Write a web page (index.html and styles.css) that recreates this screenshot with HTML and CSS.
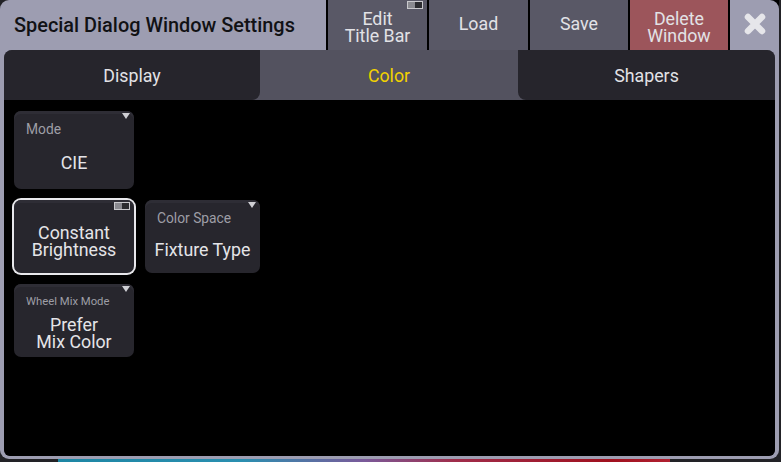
FILE: index.html
```html
<!DOCTYPE html>
<html>
<head>
<meta charset="utf-8">
<link rel="stylesheet" href="styles.css">
</head>
<body>
<div class="window">
  <div class="titlebar">
    <div class="title">Special Dialog Window Settings</div>
    <div class="btns">
      <div class="btn w99 two">
        <svg class="toggle" width="16" height="8" viewBox="0 0 16 8"><rect x="0.5" y="0.5" width="15" height="7" fill="#8a8a90" stroke="#c8c8cc"/><rect x="8" y="1" width="7" height="6" fill="#2c2c30"/></svg>
        <span>Edit<br>Title Bar</span>
      </div>
      <div class="btn w99"><span>Load</span></div>
      <div class="btn w98"><span>Save</span></div>
      <div class="btn w98 danger two"><span>Delete<br>Window</span></div>
      <div class="close">
        <svg width="24" height="24" viewBox="0 0 24 24"><path d="M5 5 L19 19 M19 5 L5 19" stroke="#e6e6ea" stroke-width="6.5" stroke-linecap="round"/></svg>
      </div>
    </div>
  </div>
  <div class="content">
    <div class="tabs">
      <div class="tab tab-left">Display</div>
      <div class="tab tab-active">Color</div>
      <div class="tab tab-right">Shapers</div>
    </div>
    <div class="body">
      <div class="grid">
        <div class="card tall">
          <span class="tri"></span>
          <div class="label">Mode</div>
          <div class="value">CIE</div>
        </div>
        <div></div>
        <div class="card selected nolabel">
          <svg class="toggle-card" width="16" height="8" viewBox="0 0 16 8"><rect x="0.5" y="0.5" width="15" height="7" fill="#8a8a90" stroke="#c8c8cc"/><rect x="8" y="1" width="7" height="6" fill="#2c2c30"/></svg>
          <div class="value">Constant<br>Brightness</div>
        </div>
        <div class="card">
          <span class="tri"></span>
          <div class="label">Color Space</div>
          <div class="value">Fixture Type</div>
        </div>
        <div class="card">
          <span class="tri"></span>
          <div class="label small">Wheel Mix Mode</div>
          <div class="value">Prefer<br>Mix Color</div>
        </div>
      </div>
    </div>
  </div>
</div>
<div class="strip"></div>
</body>
</html>
```
FILE: styles.css
```css
html, body {
  margin: 0;
  padding: 0;
}
body {
  width: 781px;
  height: 462px;
  background: #222226;
  font-family: Roboto, "Liberation Sans", sans-serif;
  overflow: hidden;
}
.window {
  width: 779px;
  height: 459px;
  box-sizing: border-box;
  background: #9d9db1;
  border-radius: 9px;
  padding-bottom: 3px;
  display: flex;
  flex-direction: column;
}
.titlebar {
  height: 50px;
  display: flex;
  flex-shrink: 0;
}
.title {
  width: 326px;
  padding-left: 14px;
  box-sizing: border-box;
  display: flex;
  align-items: center;
  font-size: 19.9px;
  font-weight: 500;
  color: #111114;
  padding-top: 1px;
  white-space: nowrap;
}
.btns {
  flex: 1;
  display: flex;
  gap: 2px;
  background: #000;
  padding-left: 2px;
}
.btn {
  position: relative;
  background: #595866;
  color: #e2e2e6;
  font-size: 17.8px;
  line-height: 17px;
  display: flex;
  align-items: center;
  justify-content: center;
  text-align: center;
  padding-bottom: 3px;
  box-sizing: border-box;
  white-space: nowrap;
}
.btn.two {
  padding-bottom: 0;
  padding-top: 4px;
}
.w99 { width: 99px; }
.w98 { width: 98px; }
.danger { background: #9c555b; }
.toggle {
  position: absolute;
  top: 1px;
  right: 4px;
}
.close {
  flex: 1;
  background: #9d9db1;
  border-top-right-radius: 9px;
  display: flex;
  align-items: center;
  justify-content: center;
  padding-bottom: 2px;
}
.content {
  flex: 1;
  margin: 0 4px;
  background: #53525f;
  border-radius: 8px 8px 6px 6px;
  overflow: hidden;
  display: flex;
  flex-direction: column;
}
.tabs {
  height: 50px;
  display: flex;
  flex-shrink: 0;
}
.tab {
  display: flex;
  align-items: center;
  justify-content: center;
  font-size: 17.8px;
  color: #e2e2e6;
  padding-top: 1px;
  box-sizing: border-box;
}
.tab-left {
  width: 256px;
  background: #26252c;
  border-bottom-right-radius: 8px;
}
.tab-active {
  width: 258px;
  color: #f2d200;
}
.tab-right {
  flex: 1;
  background: #26252c;
  border-bottom-left-radius: 8px;
}
.body {
  flex: 1;
  background: #000;
  padding: 11px 10px;
}
.grid {
  display: grid;
  grid-template-columns: 120px 115px;
  grid-template-rows: 78px 73px 73px;
  gap: 11px;
}
.card {
  position: relative;
  background: #27262d;
  box-shadow: inset 0 3px 0 #2e2d35;
  border-radius: 7px;
  display: flex;
  flex-direction: column;
  color: #e4e4e8;
}
.card.selected {
  box-shadow: 0 0 0 2px #e8e8ec, inset 0 3px 0 #2e2d35;
}
.label {
  padding: 11px 12px 0;
  font-size: 13.8px;
  line-height: 14px;
  color: #9e9ea6;
  height: 25px;
  box-sizing: border-box;
  white-space: nowrap;
}
.label.small {
  font-size: 11.3px;
}
.value {
  flex: 1;
  display: flex;
  align-items: center;
  justify-content: center;
  text-align: center;
  font-size: 17.8px;
  line-height: 17px;
  white-space: nowrap;
}
.nolabel {
  padding-top: 8px;
}
.tri {
  position: absolute;
  top: 2px;
  right: 4px;
  width: 0;
  height: 0;
  border-left: 4px solid transparent;
  border-right: 4px solid transparent;
  border-top: 6px solid #cfcfd4;
}
.toggle-card {
  position: absolute;
  top: 2px;
  right: 4px;
}
.strip {
  margin-left: 58px;
  width: 612px;
  height: 3px;
  background: linear-gradient(90deg, #1d86a4 0%, #2a8fb0 30%, #7a5a9a 50%, #a02c4a 65%, #a0101e 90%, #b02030 100%);
}
```
